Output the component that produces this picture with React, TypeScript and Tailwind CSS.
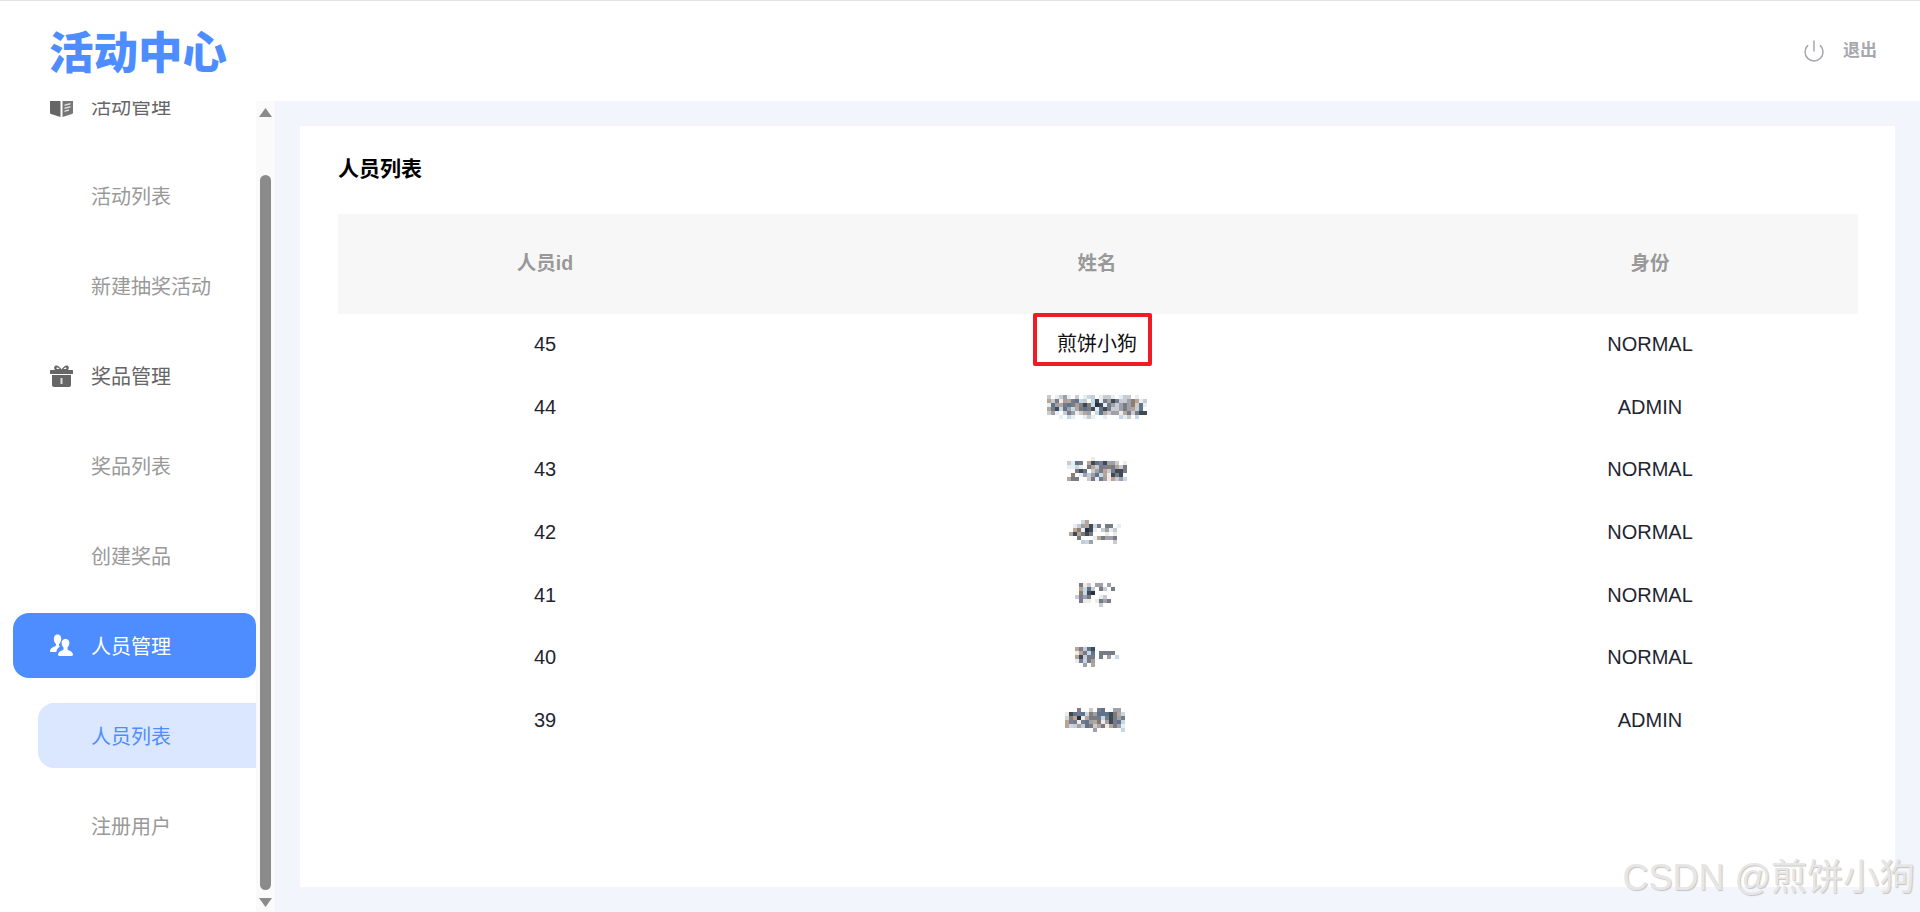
import React from "react";
import { Power } from "lucide-react";

const palette: Record<string, string> = {
  d: "#3f4a58", g: "#777b85", m: "#a0a0a8", l: "#c8ccd0", b: "#c5d8e8",
  t: "#b8a596", s: "#5f7488", c: "#f3ebe0", n: "#283040", p: "#8a7f70", w: "#e8edf2", v: "#7d7a9a",
};

function Mosaic({ rows, className }: { rows: string[]; className?: string }) {
  const cols = rows[0].length;
  return (
    <svg width={cols * 4} height={rows.length * 4} className={className} aria-hidden="true">
      {rows.map((r, y) =>
        r.split("").map((ch, x) =>
          palette[ch] ? <rect key={`${x}-${y}`} x={x * 4} y={y * 4} width={4} height={4} fill={palette[ch]} /> : null
        )
      )}
    </svg>
  );
}

const mosaics: Record<string, string[]> = {
  a: [
    "l.wlmw.l.wbl.wllw.wll.w..",
    "tlgcmtgsbl.bdwgmdgllmptwl",
    "wsmtgsgmpdpbndwgmlmgmplsw",
    "tgdbsmbtgsgdwsdgllmgmtls.",
    "lmw.lgmwltm.bstlmmwtglgdd",
    "...w.bw..wlw..w...bwl.b..",
  ],
  b: [
    "......c........",
    "lwsg.tdsvdmml.c",
    "wwbc.gtlgvpgtlg",
    "..gds.lmgtlgddg",
    ".p.wmlmsbtcdgd.",
    "tgg..lgwgmctlmb",
  ],
  c: [
    "...bt.........",
    ".wlmtdbg.gg.w.",
    ".tpwndw.lmwl..",
    "tdtgdg...c.w..",
    "..g...wtgmmg..",
    "...lbm.....l..",
  ],
  d: [
    ".gcl.mm.m..",
    ".tbsl.gl.g.",
    ".pbdn......",
    "lvmg..wl...",
    ".gwc.wgmg..",
    "......l....",
  ],
  e: [
    "tvlsd......",
    "ctgbs.gggg.",
    "tdlgg.g.m.b",
    "wvbgm......",
    "..m.t......",
  ],
  f: [
    "...v..l.gs..mm..",
    "cdsgsbpmsssdgtb.",
    "bptnwtgggbgdgmg.",
    "tvgwgsmtgcmdgsb.",
    "tblmlsgltgctgmw.",
    ".......m......b.",
  ],
};

const people = [
  { id: 45, role: "NORMAL", name: true },
  { id: 44, role: "ADMIN", m: "a" },
  { id: 43, role: "NORMAL", m: "b" },
  { id: 42, role: "NORMAL", m: "c" },
  { id: 41, role: "NORMAL", m: "d" },
  { id: 40, role: "NORMAL", m: "e" },
  { id: 39, role: "ADMIN", m: "f" },
] as { id: number; role: string; name?: boolean; m?: string }[];

function BoxIcon() {
  return (
    <svg width="23" height="23" viewBox="0 0 23 23" aria-hidden="true" className="mt-[2px]">
      <path d="M0 3 L10.5 6 V22 L1 19 Q0 18.6 0 18 Z" fill="#666" />
      <path d="M12.5 6 L23 3 V18 Q23 18.6 22 19 L12.5 22 Z" fill="#777" />
      <path d="M14.5 9.5 L20.5 8 V9.5 L14.5 11 Z M14.5 12.5 L20.5 11 V12.5 L14.5 14 Z M14.5 15.5 L19 14.3 V15.8 L14.5 17 Z" fill="#ddd" />
    </svg>
  );
}

function GiftIcon() {
  return (
    <svg width="23" height="23" viewBox="0 0 23 23" aria-hidden="true">
      <path d="M5 6 C3 3 5 1 7 1.5 C9 2 10.5 4 11.5 5.5 C12.5 4 14 2 16 1.5 C18 1 20 3 18 6 Z M7 3.4 C6 3.6 6.6 5 7.6 5 H9.6 C8.8 4 8 3.3 7 3.4 Z M16 3.4 C15 3.3 14.2 4 13.4 5 H15.4 C16.4 5 17 3.6 16 3.4 Z" fill="#666" fillRule="evenodd" />
      <rect x="0" y="6" width="23" height="4" rx="0.5" fill="#666" />
      <path d="M2 11 H21 V21 Q21 23 19 23 H4 Q2 23 2 21 Z" fill="#666" />
      <rect x="10.5" y="14" width="2" height="6" fill="#ddd" />
    </svg>
  );
}

function UsersIcon() {
  return (
    <svg width="23" height="23" viewBox="0 0 23 23" aria-hidden="true">
      <path d="M7.5 0.5 C10.5 0.5 11.5 3 11.2 5.5 C11 7.5 10 9.2 9 10 V11.5 C9 12 9.4 12.3 10 12.6 C8 13.8 6.6 15.6 6.3 18 H1 C0.2 18 0 17.5 0 17 C0 14.8 2 13.3 5 12.2 C5.6 12 6 11.7 6 11.2 V10 C4.8 9 4 7.4 3.9 5.5 C3.7 2.8 4.8 0.5 7.5 0.5 Z" fill="#fff" />
      <path d="M15.5 5 C18.4 5 19.6 7.2 19.3 9.6 C19.1 11.2 18.4 12.7 17.5 13.6 V15 C17.5 15.6 18 15.9 18.6 16.2 C21 17.2 23 18.4 23 20.6 C23 21.5 22.5 22 21.6 22 H9.4 C8.5 22 8 21.5 8 20.6 C8 18.4 10 17.2 12.4 16.2 C13 15.9 13.5 15.6 13.5 15 V13.6 C12.6 12.7 11.9 11.2 11.7 9.6 C11.4 7.2 12.6 5 15.5 5 Z" fill="#fff" />
    </svg>
  );
}

function Parent({ icon, label, active }: { icon: React.ReactNode; label: string; active?: boolean }) {
  return (
    <div
      className={`h-[65px] mb-[25px] pl-[37px] flex items-center gap-[18px] text-[20px] rounded-tl-[16px] rounded-bl-[16px] rounded-tr-[12px] rounded-br-[12px] ${
        active ? "bg-[#4e8dff] text-white" : "text-[#666666]"
      }`}
    >
      <span className="w-[23px] flex justify-center shrink-0">{icon}</span>
      <span className="pt-[3px]">{label}</span>
    </div>
  );
}

function Child({ label, active }: { label: string; active?: boolean }) {
  return (
    <div
      className={`h-[65px] mb-[25px] ml-[25px] pl-[53px] flex items-center text-[20px] rounded-l-[16px] ${
        active ? "bg-[#dbe7ff] text-[#4e8dff]" : "text-[#999999]"
      }`}
    >
      <span className="pt-[3px]">{label}</span>
    </div>
  );
}

export default function App() {
  return (
    <div className="relative h-[912px] w-[1920px] overflow-hidden bg-white font-['Liberation_Sans','Noto_Sans_CJK_SC',sans-serif]">
      <div className="h-[1px] bg-[#e3e3e3]" />
      <header className="h-[100px] flex items-center justify-between bg-white">
        <div className="pl-[49px] pb-[2px] text-[44.5px] leading-none font-black tracking-normal text-[#4e8dff] font-['Noto_Sans_CJK_SC',sans-serif]">
          活动中心
        </div>
        <div className="flex items-center gap-[17px] pr-[43px] text-[#a6a8ad]">
          <Power size={24} strokeWidth={1.5} />
          <span className="text-[17px] font-bold">退出</span>
        </div>
      </header>
      <div className="flex h-[811px]">
        <aside className="w-[256px] shrink-0 overflow-hidden bg-white">
          <div className="-mt-[28px] pl-[13px]">
            <Parent icon={<BoxIcon />} label="活动管理" />
            <Child label="活动列表" />
            <Child label="新建抽奖活动" />
            <Parent icon={<GiftIcon />} label="奖品管理" />
            <Child label="奖品列表" />
            <Child label="创建奖品" />
            <Parent icon={<UsersIcon />} label="人员管理" active />
            <Child label="人员列表" active />
            <Child label="注册用户" />
          </div>
        </aside>
        <div className="w-[19px] shrink-0 bg-[#fafafa] flex flex-col items-center pt-[7px]">
          <svg width="13" height="9" viewBox="0 0 13 9" aria-hidden="true"><path d="M6.5 0 L13 9 H0 Z" fill="#8b8b8b" /></svg>
          <div className="mt-[58px] w-[11px] h-[715px] rounded-full bg-[#8b8b8b]" />
          <svg width="13" height="9" viewBox="0 0 13 9" aria-hidden="true" className="mt-[8px]"><path d="M0 0 H13 L6.5 9 Z" fill="#8b8b8b" /></svg>
        </div>
        <main className="flex-1 bg-[#f2f5fc] pt-[25px] px-[25px]">
          <section className="h-[761px] bg-white pl-[38px] pr-[37px]">
            <h1 className="pt-[29px] h-[88px] text-[21px] leading-[28px] font-bold text-black">人员列表</h1>
            <div className="grid grid-cols-[414px_690px_416px] h-[100px] items-center bg-[#f7f7f7] text-[19.5px] font-bold text-[#999999] text-center">
              <div>人员id</div>
              <div>姓名</div>
              <div>身份</div>
            </div>
            <div className="-mt-[1px] grid auto-rows-[62.6px] text-[20px] text-[#1f2530] text-center">
              {people.map((p) => (
                <div key={p.id} className="grid grid-cols-[414px_690px_416px] items-center">
                  <div>{p.id}</div>
                  <div className="flex justify-center">
                    {p.name ? (
                      <span className="text-[20px] text-[#111]">煎饼小狗</span>
                    ) : (
                      <Mosaic rows={mosaics[p.m as string]} />
                    )}
                  </div>
                  <div>{p.role}</div>
                </div>
              ))}
            </div>
          </section>
        </main>
      </div>
      <div className="absolute left-[1033px] top-[313px] w-[119px] h-[53px] border-[4px] border-[#ee1c25] rounded-[2px]" />
      <div className="absolute right-[5px] top-[856px] text-[36px] leading-[44px] whitespace-nowrap text-[#e6e6e6] [text-shadow:1px_1px_1px_#c4c4c4]">
        CSDN @煎饼小狗
      </div>
    </div>
  );
}
